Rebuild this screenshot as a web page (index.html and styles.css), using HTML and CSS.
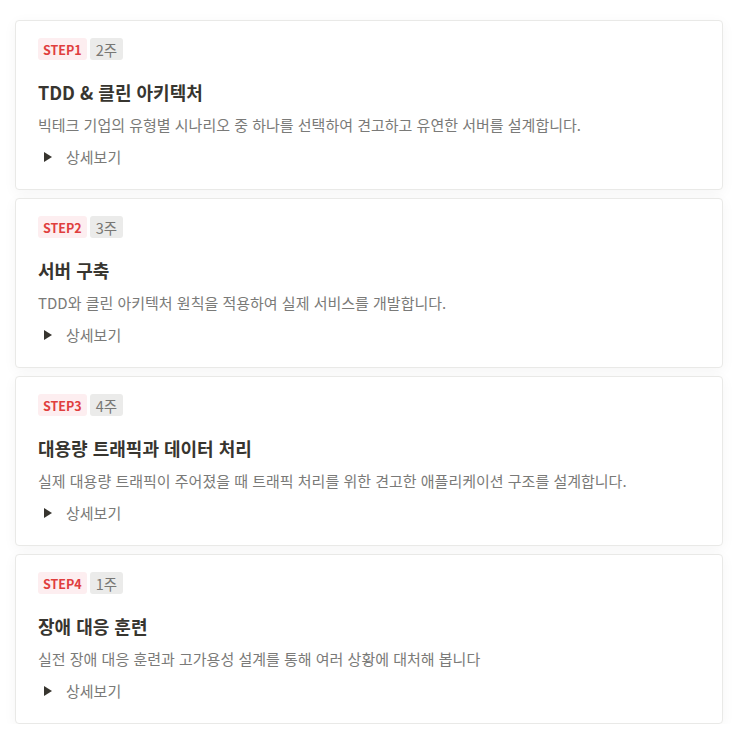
FILE: index.html
```html
<!DOCTYPE html>
<html lang="ko">
<head>
<meta charset="utf-8">
<link rel="stylesheet" href="styles.css">
</head>
<body>
<div class="list">
  <section class="card">
    <div class="tags"><span class="tag step">STEP1</span><span class="tag week">2주</span></div>
    <h2 class="title">TDD &amp; 클린 아키텍처</h2>
    <p class="desc">빅테크 기업의 유형별 시나리오 중 하나를 선택하여 견고하고 유연한 서버를 설계합니다.</p>
    <div class="toggle"><span class="tri"></span><span class="more">상세보기</span></div>
  </section>
  <section class="card">
    <div class="tags"><span class="tag step">STEP2</span><span class="tag week">3주</span></div>
    <h2 class="title">서버 구축</h2>
    <p class="desc">TDD와 클린 아키텍처 원칙을 적용하여 실제 서비스를 개발합니다.</p>
    <div class="toggle"><span class="tri"></span><span class="more">상세보기</span></div>
  </section>
  <section class="card">
    <div class="tags"><span class="tag step">STEP3</span><span class="tag week">4주</span></div>
    <h2 class="title">대용량 트래픽과 데이터 처리</h2>
    <p class="desc">실제 대용량 트래픽이 주어졌을 때 트래픽 처리를 위한 견고한 애플리케이션 구조를 설계합니다.</p>
    <div class="toggle"><span class="tri"></span><span class="more">상세보기</span></div>
  </section>
  <section class="card">
    <div class="tags"><span class="tag step">STEP4</span><span class="tag week">1주</span></div>
    <h2 class="title">장애 대응 훈련</h2>
    <p class="desc">실전 장애 대응 훈련과 고가용성 설계를 통해 여러 상황에 대처해 봅니다</p>
    <div class="toggle"><span class="tri"></span><span class="more">상세보기</span></div>
  </section>
</div>
</body>
</html>
```
FILE: styles.css
```css
html, body {
  margin: 0;
  padding: 0;
  background: #ffffff;
}
body {
  font-family: "Noto Sans CJK KR", "Noto Sans", sans-serif;
  color: #37352f;
}
.list {
  display: flex;
  flex-direction: column;
  gap: 8px;
  width: 708px;
  margin: 20px 0 0 15px;
}
.card {
  box-sizing: border-box;
  height: 170px;
  border: 1px solid #e9e9e7;
  border-radius: 4px;
  background: #fff;
  box-shadow: 0 3px 14px rgba(0, 0, 0, 0.045);
  padding: 17px 22px 0;
}
.tags {
  display: flex;
  gap: 3px;
  height: 22px;
}
.tag {
  display: flex;
  align-items: center;
  height: 22px;
  border-radius: 3px;
  padding: 0 6px;
  box-sizing: border-box;
}
.step {
  background: #fdeef0;
  color: #e03e3e;
  font-size: 12.5px;
  font-weight: 700;
  padding: 0 5px;
}
.week {
  background: #ebebea;
  color: #787774;
  font-size: 14.5px;
}
.title {
  margin: 19px 0 0;
  font-size: 18px;
  font-weight: 700;
  line-height: 27px;
  color: #37352f;
}
.desc {
  margin: 8px 0 0;
  font-size: 15px;
  line-height: 22px;
  color: #7a7a78;
}
.toggle {
  display: flex;
  align-items: center;
  margin-top: 10px;
  height: 22px;
  padding-left: 6px;
}
.tri {
  width: 0;
  height: 0;
  border-top: 5px solid transparent;
  border-bottom: 5px solid transparent;
  border-left: 8px solid #37352f;
  margin-right: 14px;
}
.more {
  font-size: 15px;
  line-height: 22px;
  color: #7a7a78;
}
```
